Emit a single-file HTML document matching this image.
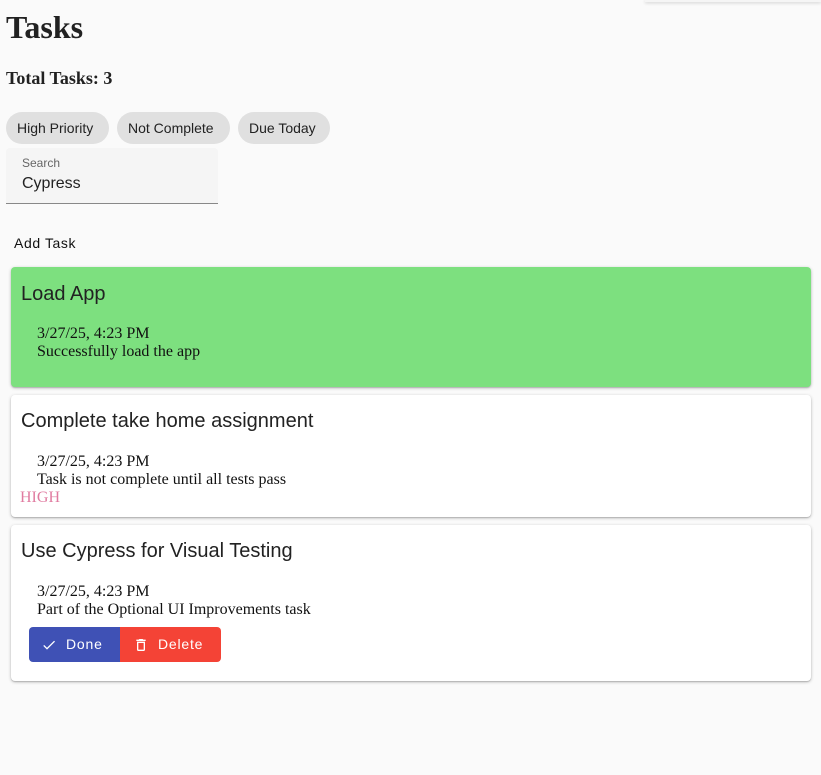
<!DOCTYPE html>
<html><head><meta charset="utf-8"><style>
*{box-sizing:border-box;margin:0;padding:0}
body{width:821px;height:775px;background:#fafafa;position:relative;overflow:hidden;font-family:"Liberation Serif",serif;color:#212121}
.abs{position:absolute}
.sans{font-family:"Liberation Sans",sans-serif}
.chip{position:absolute;top:112px;height:32px;border-radius:16px;background:#e0e0e0;font:14px "Liberation Sans",sans-serif;color:#222;line-height:32px;padding:0 11px}
.card{position:absolute;left:11px;width:800px;background:#fff;border-radius:4px;box-shadow:0 1px 3px rgba(0,0,0,.25),0 1px 1px rgba(0,0,0,.14)}
.title{position:absolute;left:10px;font:20px "Liberation Sans",sans-serif;color:#222}
.date{position:absolute;left:26px;font-size:16px;line-height:18px;color:#111}
.btn{position:absolute;top:627px;height:35px;border-radius:4px;color:#fff;font:500 14px "Liberation Sans",sans-serif;letter-spacing:.8px;line-height:35px}
</style></head><body>
<div class="abs" style="left:645px;top:0;width:176px;height:2px;box-shadow:0 1px 3px rgba(0,0,0,.2);background:#f5f5f5"></div>
<div class="abs" style="left:6px;top:8px;font-weight:bold;font-size:32px;line-height:38px">Tasks</div>
<div class="abs" style="left:6px;top:68px;font-weight:bold;font-size:18px;line-height:20px">Total Tasks: 3</div>
<div class="chip" style="left:6px;width:103px">High Priority</div>
<div class="chip" style="left:117px;width:113px">Not Complete</div>
<div class="chip" style="left:238px;width:92px">Due Today</div>
<div class="abs" style="left:6px;top:148px;width:212px;height:56px;background:#f5f5f5;border-bottom:1px solid #888;border-radius:4px 4px 0 0">
<div class="abs sans" style="left:16px;top:8px;font-size:12px;color:#666">Search</div>
<div class="abs sans" style="left:16px;top:27px;font-size:16px;color:#222">Cypress</div></div>
<div class="abs sans" style="left:14px;top:235px;font-size:14px;letter-spacing:.6px;color:#111">Add Task</div>

<div class="card" style="top:267px;height:120px;background:#7de07f">
<div class="title" style="top:16px">Load App</div>
<div class="date" style="top:58px">3/27/25, 4:23 PM<br>Successfully load the app</div></div>

<div class="card" style="top:395px;height:122px">
<div class="title" style="top:15px">Complete take home assignment</div>
<div class="date" style="top:58px">3/27/25, 4:23 PM<br>Task is not complete until all tests pass</div>
<div class="abs" style="left:9px;top:94px;font-size:16px;color:#e07ba0">HIGH</div></div>

<div class="card" style="top:525px;height:156px">
<div class="title" style="top:15px">Use Cypress for Visual Testing</div>
<div class="date" style="top:58px">3/27/25, 4:23 PM<br>Part of the Optional UI Improvements task</div></div>

<div class="btn" style="left:29px;width:91px;background:#3f51b5;border-radius:4px 0 0 4px">
<svg class="abs" style="left:12px;top:10px" width="16" height="16" viewBox="0 0 24 24"><path d="M9 16.2 4.8 12l-1.4 1.4L9 19 21 7l-1.4-1.4z" fill="#fff"/></svg>
<span class="abs" style="left:37px">Done</span></div>
<div class="btn" style="left:120px;width:101px;background:#f44336;border-radius:0 4px 4px 0">
<svg class="abs" style="left:13px;top:9px" width="16" height="18" viewBox="0 0 24 24"><path d="M6 19c0 1.1.9 2 2 2h8c1.1 0 2-.9 2-2V7H6zM8 9h8v10H8zM15.5 4l-1-1h-5l-1 1H5v2h14V4z" fill="#fff"/></svg>
<span class="abs" style="left:38px">Delete</span></div>
</body></html>
